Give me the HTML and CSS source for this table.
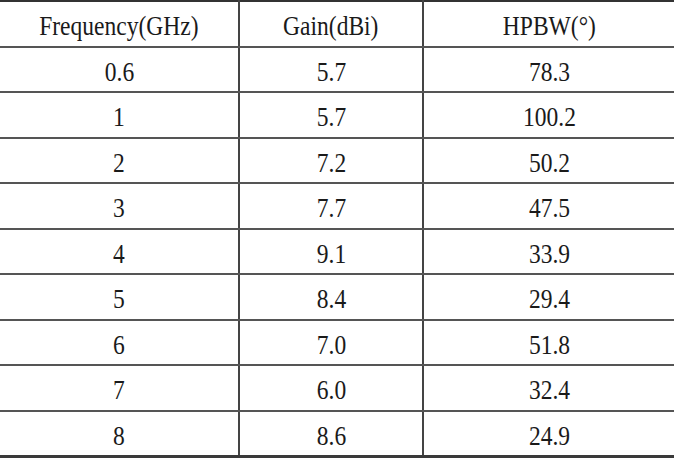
FILE: index.html
```html
<!DOCTYPE html>
<html>
<head>
<meta charset="utf-8">
<link rel="stylesheet" href="styles.css">
</head>
<body>
<table class="data">
  <colgroup>
    <col class="c1"><col class="c2"><col class="c3">
  </colgroup>
  <thead>
    <tr><th><span>Frequency(GHz)</span></th><th><span>Gain(dBi)</span></th><th><span>HPBW(°)</span></th></tr>
  </thead>
  <tbody>
    <tr><td><span>0.6</span></td><td><span>5.7</span></td><td><span>78.3</span></td></tr>
    <tr><td><span>1</span></td><td><span>5.7</span></td><td><span>100.2</span></td></tr>
    <tr><td><span>2</span></td><td><span>7.2</span></td><td><span>50.2</span></td></tr>
    <tr><td><span>3</span></td><td><span>7.7</span></td><td><span>47.5</span></td></tr>
    <tr><td><span>4</span></td><td><span>9.1</span></td><td><span>33.9</span></td></tr>
    <tr><td><span>5</span></td><td><span>8.4</span></td><td><span>29.4</span></td></tr>
    <tr><td><span>6</span></td><td><span>7.0</span></td><td><span>51.8</span></td></tr>
    <tr><td><span>7</span></td><td><span>6.0</span></td><td><span>32.4</span></td></tr>
    <tr><td><span>8</span></td><td><span>8.6</span></td><td><span>24.9</span></td></tr>
  </tbody>
</table>
</body>
</html>
```
FILE: styles.css
```css
html, body {
  margin: 0;
  padding: 0;
  background: #ffffff;
}
.data {
  border-collapse: collapse;
  table-layout: fixed;
  width: 674px;
  font-family: "Liberation Serif", "Times New Roman", serif;
  font-size: 28px;
  color: #1a1a1a;
  border-top: 2px solid #333333;
  border-bottom: 3px solid #3a3a3a;
}
.c1 { width: 239px; }
.c2 { width: 184px; }
.c3 { width: 251px; }
.data th, .data td {
  font-weight: normal;
  text-align: center;
  height: 45.5px;
  padding: 5px 0 0 0;
  line-height: 28px;
  border-bottom: 2px solid #555555;
  border-left: 2px solid #444444;
  box-sizing: border-box;
}
.data th:first-child, .data td:first-child {
  border-left: none;
}
.data tbody tr:last-child td {
  border-bottom: 3px solid #3a3a3a;
}
.data span {
  display: inline-block;
  transform: scaleX(0.84);
}
```
